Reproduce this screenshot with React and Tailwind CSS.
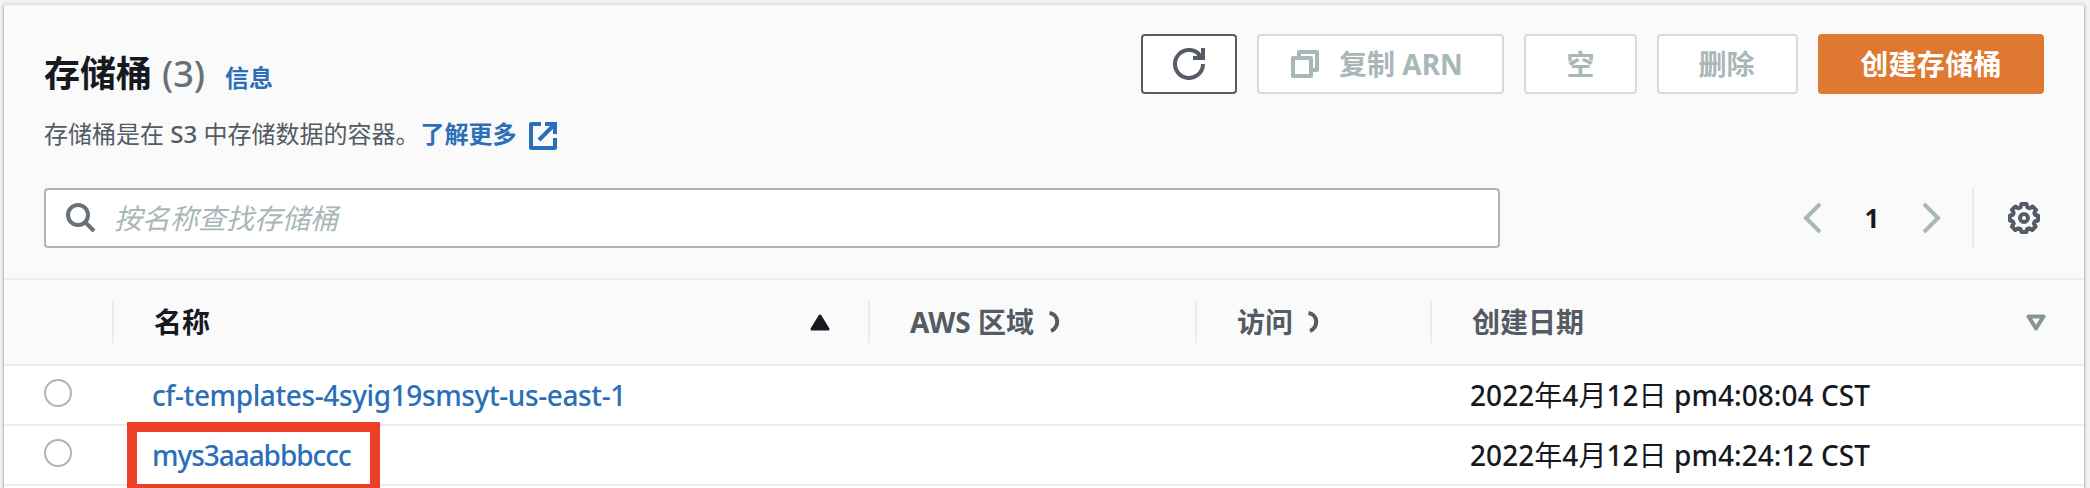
import React from "react";

function Sep() {
  return <div className="h-[42px] w-[2px] shrink-0 bg-[#eaeded]" />;
}

function Button({ className, children }) {
  return (
    <button
      className={
        "flex h-[60px] shrink-0 items-center justify-center rounded-[4px] border-2 text-[28px] font-bold leading-none " +
        className
      }
    >
      {children}
    </button>
  );
}

function Hook({ className }) {
  return (
    <svg className={"shrink-0 " + className} width="14" height="22" viewBox="0 0 14 22" fill="none">
      <path d="M2.500 2 C12.500 3.500 12.500 16.500 4 20" stroke="#545b64" strokeWidth="4" />
    </svg>
  );
}

function Row({ name, time, tracking, selected }) {
  return (
    <div className="flex h-[60px] shrink-0 items-center border-b-2 border-[#eaeded] bg-white text-[28px] leading-[58px]">
      <div className="flex w-[108px] shrink-0 pl-[40px]">
        <div className="-mt-[4px] size-[28px] rounded-full border-2 border-[#aab7b8] bg-white" />
      </div>
      <div className="relative w-[1319px] shrink-0 pl-[40px]">
        <a className={"whitespace-nowrap font-medium text-[#2a6fb8] " + tracking}>{name}</a>
        {selected && (
          <div className="absolute left-[15px] top-[-4px] h-[72px] w-[253px] border-[10px] border-[#eb4026]" />
        )}
      </div>
      <div className="whitespace-nowrap pl-[39px] font-medium tracking-[0.05px] text-[#16191f]">
        2022<span className="font-normal">年</span>4<span className="font-normal">月</span>12
        <span className="font-normal">日</span> {time}
      </div>
    </div>
  );
}

export default function App() {
  return (
    <div className="h-[488px] w-[2090px] overflow-hidden bg-[#f2f3f3] pl-[4px] pt-[4px] font-['Noto_Sans','Noto_Sans_CJK_SC',sans-serif]">
      <div className="flex h-[500px] w-[2080px] flex-col border-t-2 border-[#eaeded] bg-[#fafafa] shadow-[0_1px_3px_0_rgba(0,28,36,0.55)]">
        <div className="flex h-[88px] shrink-0 items-start pl-[40px] pr-[40px] pt-[28px]">
          <div className="flex flex-1 items-baseline pt-[14px] leading-[52px]">
            <h1 className="text-[36px] font-bold leading-[52px] text-[#16191f]">存储桶</h1>
            <span className="ml-[10px] text-[36px] font-medium leading-[52px] text-[#687078]">(3)</span>
            <a className="ml-[20px] text-[24px] font-bold text-[#2a6fb8]">信息</a>
          </div>
          <div className="flex gap-[20px]">
            <Button className="w-[96px] border-[#545b64] bg-white">
              <svg width="32" height="32" viewBox="0 0 32 32" fill="none" stroke="#545b64" strokeWidth="4">
                <path d="M30 16a14 14 0 1 1-3.6-9.4" />
                <path d="M30 0v10H20" />
                <path d="M25 6l4 4" />
              </svg>
            </Button>
            <Button className="w-[247px] border-[#d5dbdb] bg-white pr-[7px] text-[#aab7b8]">
              <svg className="mr-[20px]" width="28" height="28" viewBox="0 0 28 28" fill="none" stroke="#aab7b8" strokeWidth="4" strokeLinejoin="round">
                <rect x="2" y="8" width="18" height="18" />
                <path d="M8 8V2h18v18h-6" />
              </svg>
              <span>复制 ARN</span>
            </Button>
            <Button className="w-[113px] border-[#d5dbdb] bg-white text-[#aab7b8]">空</Button>
            <Button className="w-[141px] border-[#d5dbdb] bg-white pr-[2px] text-[#aab7b8]">删除</Button>
            <Button className="w-[226px] border-[#df7932] bg-[#df7932] tracking-[0.3px] text-white">创建存储桶</Button>
          </div>
        </div>

        <div className="flex h-[94px] shrink-0 items-start pl-[40px] pt-[22px] text-[24px] leading-[36px] text-[#545b64]">
          <span>
            存储桶是在 <span className="font-medium">S3</span> 中存储数据的容器。
          </span>
          <a className="ml-[1px] font-bold text-[#2a6fb8]">了解更多</a>
          <svg className="ml-[13px] mt-[6px]" width="28" height="28" viewBox="0 0 28 28" fill="none" stroke="#2a6fb8" strokeWidth="4">
            <path d="M12 2H2v24h24V16" strokeLinejoin="round" />
            <path d="M16 2h10v10" />
            <path d="M26 2L10 18" />
          </svg>
        </div>

        <div className="flex h-[90px] shrink-0 items-start pl-[40px] pr-[44px]">
          <div className="flex h-[60px] w-[1456px] items-center rounded-[4px] border-2 border-[#aab7b8] bg-white pl-[20px]">
            <svg width="30" height="30" viewBox="0 0 30 30" fill="none" stroke="#687078" strokeWidth="4">
              <circle cx="12" cy="12" r="10" />
              <path d="M19 19l9 9" />
            </svg>
            <span className="ml-[18px] text-[28px] italic leading-[56px] text-[#aab7b8]">按名称查找存储桶</span>
          </div>
          <div className="flex h-[60px] flex-1 items-center justify-end">
            <svg width="19" height="32" viewBox="0 0 19 32" fill="none" stroke="#aab7b8" strokeWidth="4">
              <path d="M17 2L3 16l14 14" />
            </svg>
            <span className="w-[100px] text-center text-[26px] font-bold text-[#16191f]">1</span>
            <svg width="19" height="32" viewBox="0 0 19 32" fill="none" stroke="#aab7b8" strokeWidth="4">
              <path d="M2 2l14 14L2 30" />
            </svg>
            <div className="ml-[31px] mr-[34px] h-[60px] w-[2px] bg-[#eaeded]" />
            <svg width="32" height="32" viewBox="0 0 32 32" fill="none" stroke="#545b64">
              <circle cx="16" cy="16" r="4" strokeWidth="4" />
              <path
                d="M13.5 2h5l.9 3.3 2.2.9 3-1.7 3.4 3.4-1.7 3 .9 2.2L30 13.5v5l-3.2.9-.9 2.2 1.7 3-3.4 3.4-3-1.7-2.2.9-.5 2.7h-5l-.9-2.7-2.2-.9-3 1.7L4 24.600l1.700-3-.9-2.200L2 18.500v-5l2.800-.6.9-2.200-1.700-3L7.400 4.500l3 1.700 2.200-.9z"
                strokeWidth="4"
                strokeLinejoin="round"
              />
            </svg>
          </div>
        </div>

        <div className="flex h-[88px] shrink-0 items-center border-y-2 border-[#eaeded] text-[28px] font-bold leading-[84px] text-[#545b64]">
          <div className="w-[108px] shrink-0" />
          <Sep />
          <div className="flex w-[754px] shrink-0 items-center pl-[40px] pr-[38px] text-[#16191f]">
            <span className="flex-1">名称</span>
            <svg width="20" height="17" viewBox="0 0 20 17">
              <path d="M10 2L18 15H2Z" fill="#16191f" stroke="#16191f" strokeWidth="3" strokeLinejoin="round" />
            </svg>
          </div>
          <Sep />
          <div className="flex w-[325px] shrink-0 items-center pl-[40px]">
            <span>AWS 区域</span>
            <Hook className="ml-[13px]" />
          </div>
          <Sep />
          <div className="flex w-[233px] shrink-0 items-center pl-[40px]">
            <span>访问</span>
            <Hook className="ml-[13px]" />
          </div>
          <Sep />
          <div className="flex flex-1 items-center pl-[40px] pr-[38px]">
            <span className="flex-1">创建日期</span>
            <svg width="20" height="17" viewBox="0 0 20 17" fill="none">
              <path d="M10 14.500L17.500 2.500H2.500Z" stroke="#879596" strokeWidth="4" strokeLinejoin="round" />
            </svg>
          </div>
        </div>

        <Row name="cf-templates-4syig19smsyt-us-east-1" time="pm4:08:04 CST" tracking="tracking-[-0.39px]" />
        <Row name="mys3aaabbbccc" time="pm4:24:12 CST" tracking="tracking-[-1.05px]" selected />
        <div className="flex-1 bg-white" />
      </div>
    </div>
  );
}
